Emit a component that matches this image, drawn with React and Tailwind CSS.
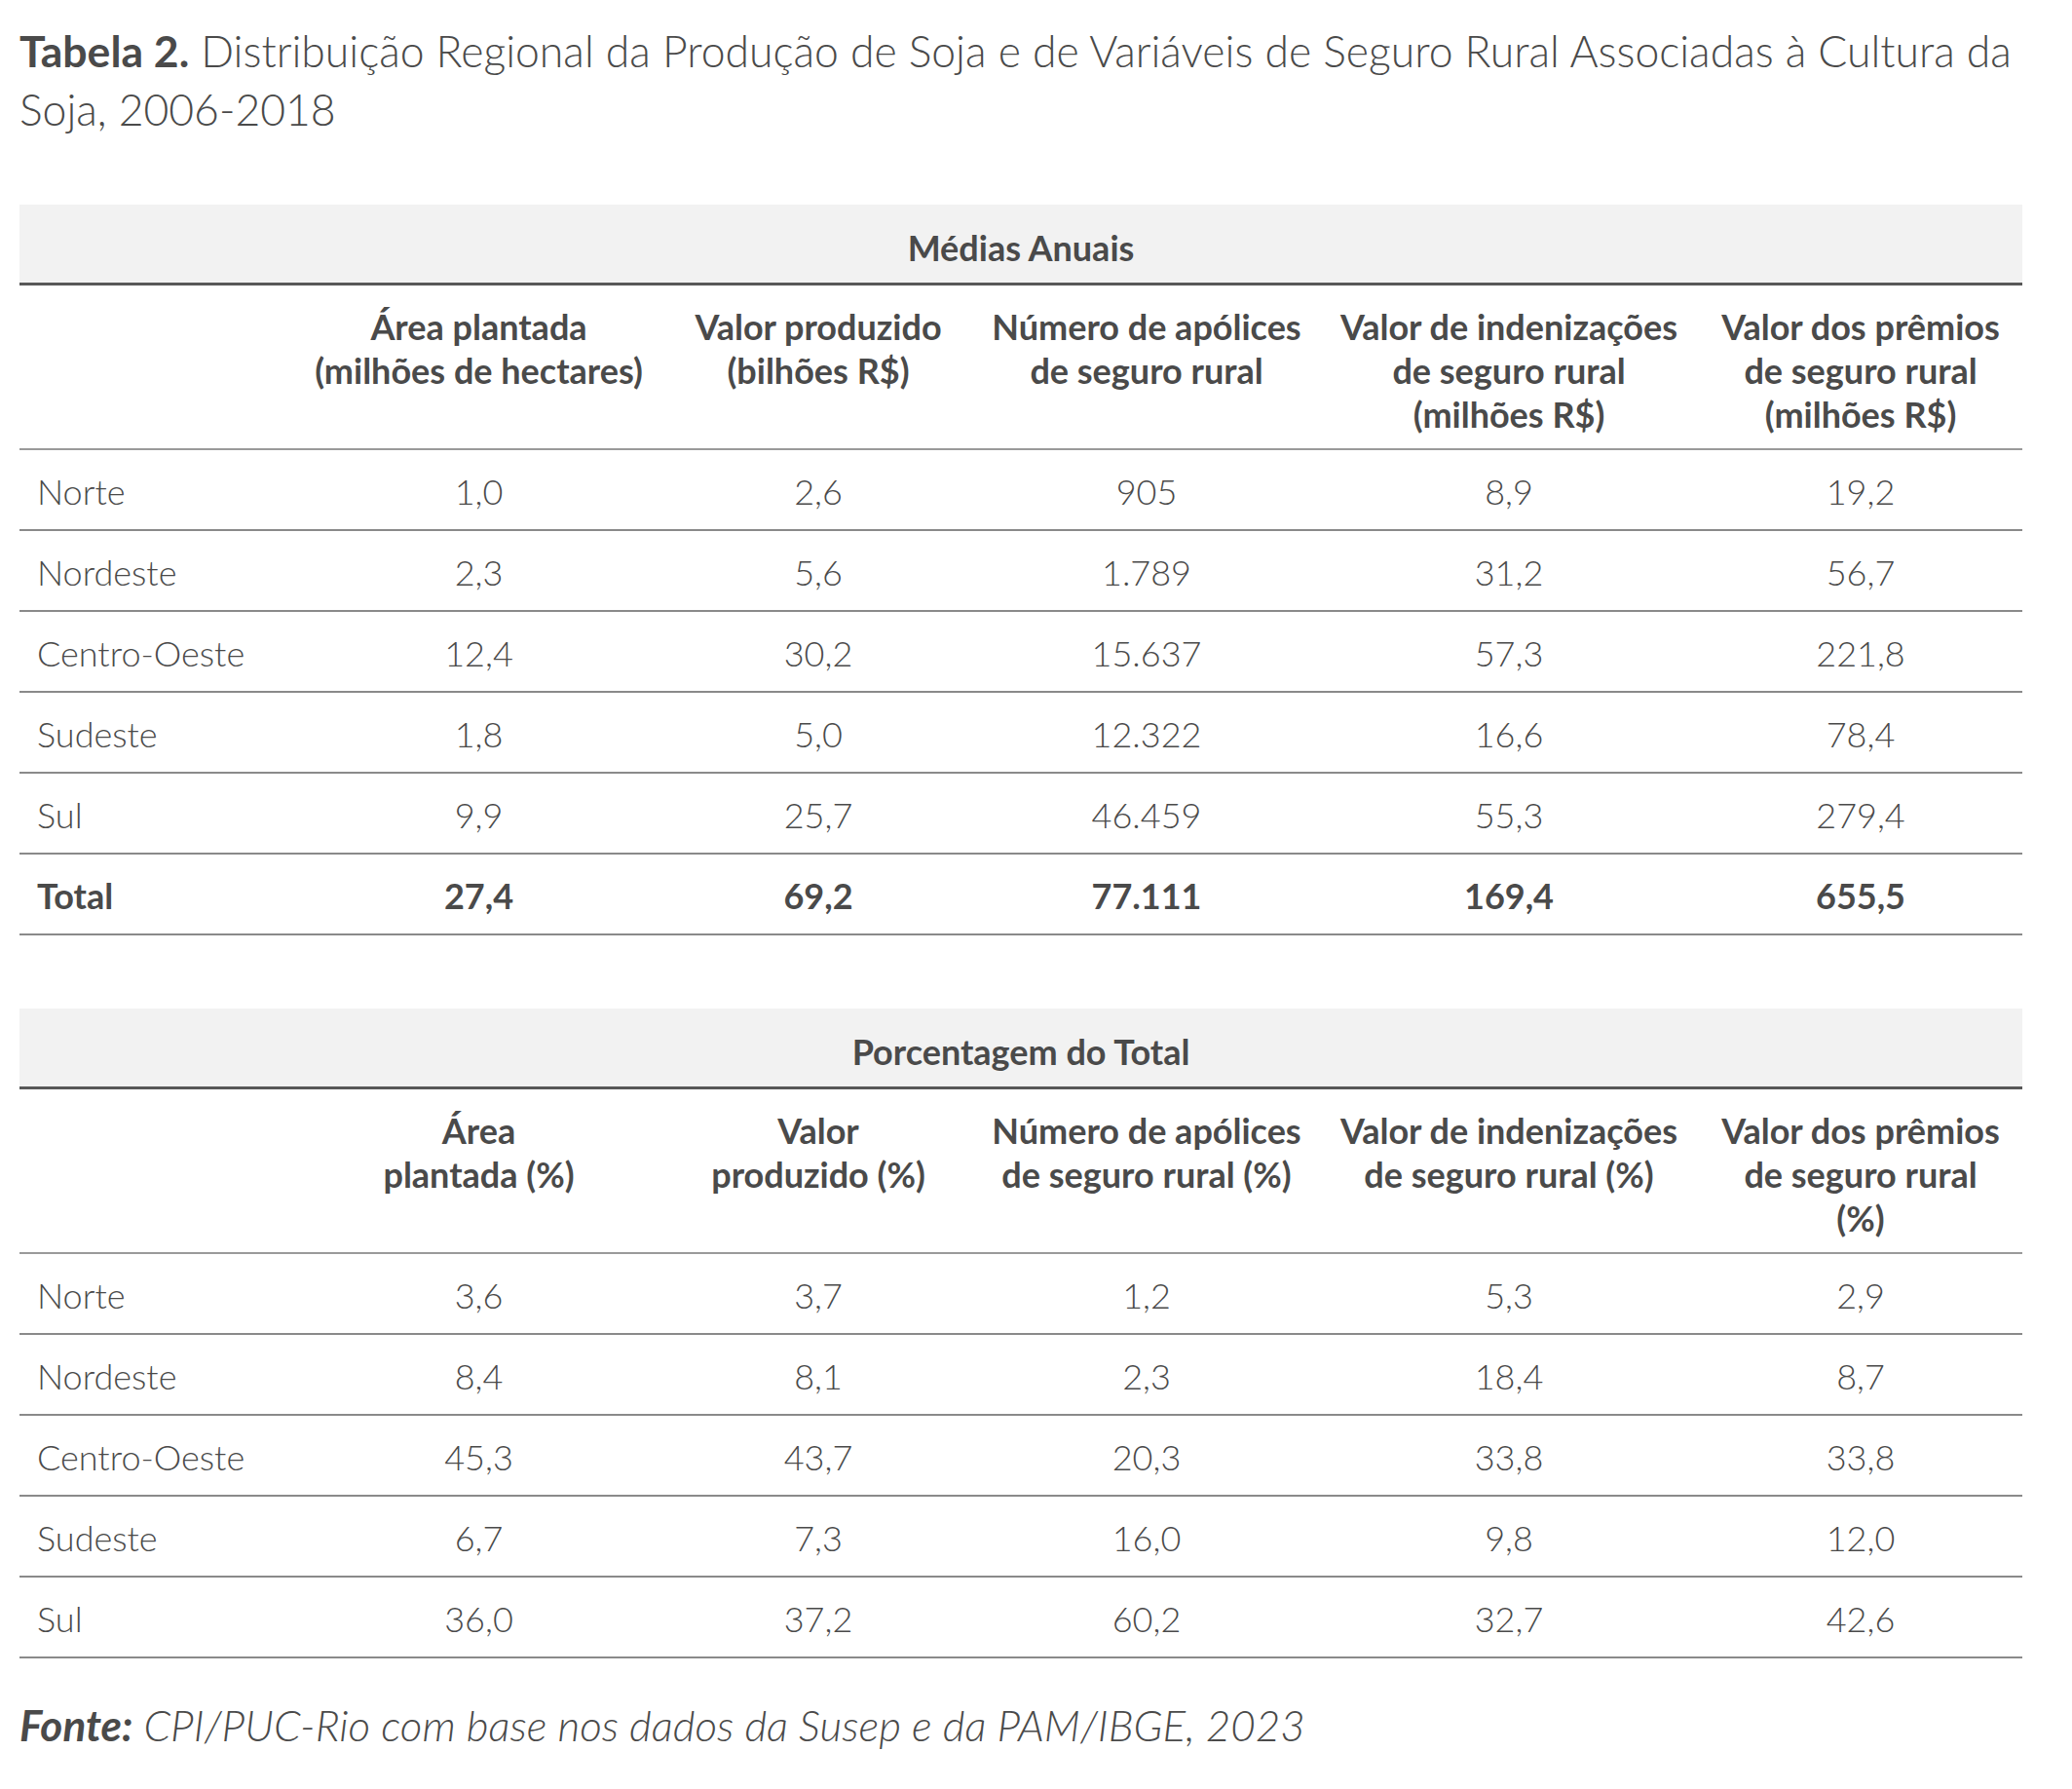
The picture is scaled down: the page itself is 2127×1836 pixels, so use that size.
import React from "react";

const COLS = "grid grid-cols-[283px_377px_320px_354px_390px_332px]";

const t1Headers = [
  ["Área plantada", "(milhões de hectares)"],
  ["Valor produzido", "(bilhões R$)"],
  ["Número de apólices", "de seguro rural"],
  ["Valor de indenizações", "de seguro rural", "(milhões R$)"],
  ["Valor dos prêmios", "de seguro rural", "(milhões R$)"],
];

const t1Rows = [
  ["Norte", "1,0", "2,6", "905", "8,9", "19,2"],
  ["Nordeste", "2,3", "5,6", "1.789", "31,2", "56,7"],
  ["Centro-Oeste", "12,4", "30,2", "15.637", "57,3", "221,8"],
  ["Sudeste", "1,8", "5,0", "12.322", "16,6", "78,4"],
  ["Sul", "9,9", "25,7", "46.459", "55,3", "279,4"],
  ["Total", "27,4", "69,2", "77.111", "169,4", "655,5"],
];

const t2Headers = [
  ["Área", "plantada (%)"],
  ["Valor", "produzido (%)"],
  ["Número de apólices", "de seguro rural (%)"],
  ["Valor de indenizações", "de seguro rural (%)"],
  ["Valor dos prêmios", "de seguro rural", "(%)"],
];

const t2Rows = [
  ["Norte", "3,6", "3,7", "1,2", "5,3", "2,9"],
  ["Nordeste", "8,4", "8,1", "2,3", "18,4", "8,7"],
  ["Centro-Oeste", "45,3", "43,7", "20,3", "33,8", "33,8"],
  ["Sudeste", "6,7", "7,3", "16,0", "9,8", "12,0"],
  ["Sul", "36,0", "37,2", "60,2", "32,7", "42,6"],
];

function Table({ title, headers, rows, boldLast }) {
  return (
    <div className="w-[2056px]">
      <div className="h-[80px] bg-[#f2f2f2] flex items-center justify-center pt-[8px] text-[36px] font-bold">
        {title}
      </div>
      <div className="h-[3px] bg-[#585858]" />
      <div className={`${COLS} h-[169px] border-b-2 border-[#9a9a9a]`}>
        <div />
        {headers.map((lines, i) => (
          <div key={i} className="pt-[20px] text-center text-[36px] font-bold leading-[45px]">
            {lines.map((l, j) => (
              <div key={j} className="whitespace-nowrap">{l}</div>
            ))}
          </div>
        ))}
      </div>
      {rows.map((r, ri) => {
        const bold = boldLast && ri === rows.length - 1;
        return (
          <div
            key={ri}
            className={`${COLS} h-[83px] items-center pt-[2px] border-b-2 border-[#8a8a8a] text-[36px] ${bold ? "font-bold" : "font-light"}`}
          >
            {r.map((c, ci) => (
              <div key={ci} className={ci === 0 ? "pl-[18px]" : "text-center"}>
                {c}
              </div>
            ))}
          </div>
        );
      })}
    </div>
  );
}

export default function App() {
  return (
    <div
      className="w-[2127px] min-h-[1836px] bg-white text-[#4a4a4a] pl-[20px] pt-[22px]"
      style={{ fontFamily: "Lato, 'Open Sans', sans-serif" }}
    >
      <div className="text-[44.5px] leading-[60px] font-light">
        <div className="whitespace-nowrap">
          <span className="font-bold">Tabela 2.</span> Distribuição Regional da Produção de Soja e de Variáveis de Seguro Rural Associadas à Cultura da
        </div>
        <div>Soja, 2006-2018</div>
      </div>
      <div className="mt-[68px]">
        <Table title="Médias Anuais" headers={t1Headers} rows={t1Rows} boldLast />
      </div>
      <div className="mt-[75px]">
        <Table title="Porcentagem do Total" headers={t2Headers} rows={t2Rows} />
      </div>
      <div className="mt-[38px] text-[44px] leading-[60px] italic font-light">
        <span className="font-bold">Fonte:</span> CPI/PUC-Rio com base nos dados da Susep e da PAM/IBGE, 2023
      </div>
    </div>
  );
}
